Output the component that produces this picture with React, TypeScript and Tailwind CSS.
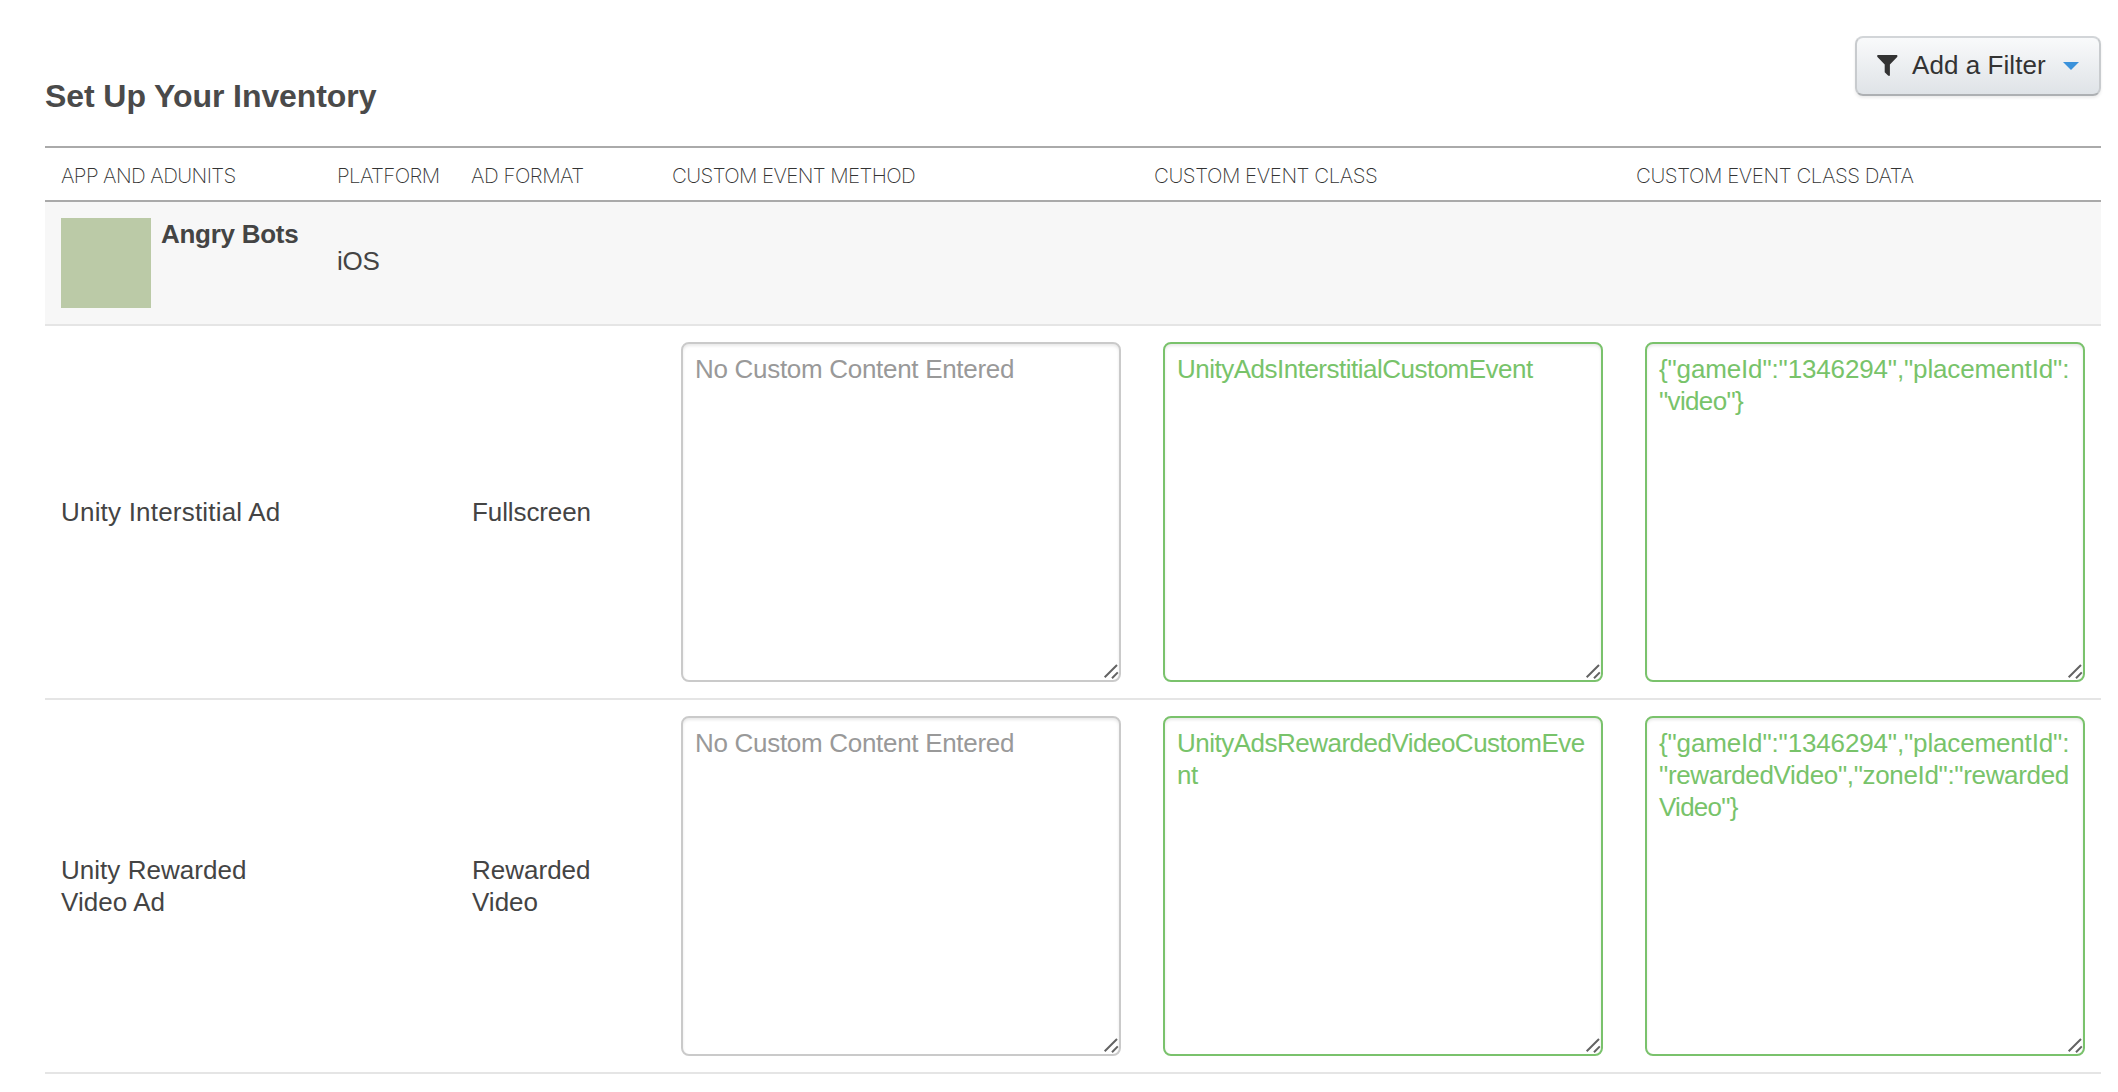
import React from 'react';

type Line = { text: string; spacing: string };

const COLUMNS = 'grid grid-cols-[276px_134px_201px_482px_482px_481px] pl-4';

function Grip() {
  return (
    <svg className="absolute bottom-0 right-0" width="18" height="18" viewBox="0 0 18 18" fill="none" stroke="#636363" strokeWidth="2">
      <path d="M3.7 15.3 16 3M11 16.2 16.8 10.4" />
    </svg>
  );
}

function Field({ lines, filled = false }: { lines: Line[]; filled?: boolean }) {
  return (
    <div
      className={`relative ml-[9px] h-[340px] w-[440px] self-center whitespace-pre rounded-lg border-2 bg-white px-3 py-[9px] shadow-[inset_0_2px_3px_rgba(0,0,0,0.09)] ${
        filled ? 'border-[#7ac26c] text-[#78c36a]' : 'border-[#cacaca] text-[#999999]'
      }`}
    >
      {lines.map((l) => (
        <div key={l.text} className={l.spacing}>{l.text}</div>
      ))}
      <Grip />
    </div>
  );
}

const HEADERS: Line[] = [
  { text: 'APP AND ADUNITS', spacing: 'tracking-[-0.6px]' },
  { text: 'PLATFORM', spacing: 'tracking-[-0.6px]' },
  { text: 'AD FORMAT', spacing: 'tracking-[-0.5px]' },
  { text: 'CUSTOM EVENT METHOD', spacing: 'tracking-[-0.62px]' },
  { text: 'CUSTOM EVENT CLASS', spacing: 'tracking-[-0.46px]' },
  { text: 'CUSTOM EVENT CLASS DATA', spacing: 'tracking-[-0.45px]' },
];

const EMPTY: Line[] = [{ text: 'No Custom Content Entered', spacing: 'tracking-[-0.3px]' }];
const GAME_LINE: Line = { text: '{"gameId":"1346294","placementId":', spacing: 'tracking-[-0.15px]' };

const UNITS: { name: Line[]; format: Line[]; cls: Line[]; data: Line[] }[] = [
  {
    name: [{ text: 'Unity Interstitial Ad', spacing: 'tracking-[0.2px]' }],
    format: [{ text: 'Fullscreen', spacing: 'tracking-[-0.1px]' }],
    cls: [{ text: 'UnityAdsInterstitialCustomEvent', spacing: 'tracking-[-0.505px]' }],
    data: [GAME_LINE, { text: '"video"}', spacing: 'tracking-[-0.65px]' }],
  },
  {
    name: [
      { text: 'Unity Rewarded', spacing: 'tracking-[0.03px]' },
      { text: 'Video Ad', spacing: 'tracking-[0.06px]' },
    ],
    format: [
      { text: 'Rewarded', spacing: 'tracking-[0px]' },
      { text: 'Video', spacing: 'tracking-[0px]' },
    ],
    cls: [
      { text: 'UnityAdsRewardedVideoCustomEve', spacing: 'tracking-[-0.51px]' },
      { text: 'nt', spacing: 'tracking-[-0.48px]' },
    ],
    data: [
      GAME_LINE,
      { text: '"rewardedVideo","zoneId":"rewarded', spacing: 'tracking-[-0.34px]' },
      { text: 'Video"}', spacing: 'tracking-[-0.75px]' },
    ],
  },
];

function Label({ lines, indent = false }: { lines: Line[]; indent?: boolean }) {
  return (
    <div className={`self-center whitespace-nowrap ${indent ? 'pl-px' : ''}`}>
      {lines.map((l) => (
        <div key={l.text} className={l.spacing}>{l.text}</div>
      ))}
    </div>
  );
}

export default function App() {
  return (
    <div className="h-[1092px] w-[2118px] overflow-hidden bg-white pl-[45px] pr-[17px] font-['Liberation_Sans',Arial,sans-serif] text-[26px] leading-8 text-[#444444]">
      <header className="flex h-[146px] items-start justify-between">
        <h1 className="mt-[76px] text-[32px] font-bold leading-10 tracking-[-0.08px] text-[#4a4a4a]">Set Up Your Inventory</h1>
        <button className="mt-9 flex h-[60px] w-[246px] items-center rounded-lg border-2 border-[#d2d5d8] border-b-[#adb0b3] border-r-[#c8cbce] border-l-[#c8cbce] bg-linear-to-b from-[#f9fafb] to-[#dfe3e7] pb-px pl-5 text-[#333333] shadow-[0_2px_3px_rgba(0,0,0,0.08)]">
          <svg width="21" height="21" viewBox="0 0 21 21" fill="#333333">
            <path d="M0.4 0H20.2L20.4 1.8 12.9 9.4V20.8H11.3L7.7 17.2V9.4L0.2 1.8Z" />
          </svg>
          <span className="ml-[14px] whitespace-nowrap pb-[2px] tracking-[0.06px]">Add a Filter</span>
          <svg className="ml-[17px]" width="16" height="8" viewBox="0 0 16 8" fill="#3b92db">
            <path d="M0 0H16L8 8Z" />
          </svg>
        </button>
      </header>

      <div className={`${COLUMNS} h-14 border-y-2 border-[#aaaaaa] pt-3 font-[Inter] text-[20.5px] font-extralight text-[#333333]`}>
        {HEADERS.map((h) => (
          <div key={h.text} className={`whitespace-nowrap ${h.spacing}`}>{h.text}</div>
        ))}
      </div>

      <div className={`${COLUMNS} h-[124px] border-b-2 border-[#e5e5e5] bg-[#f7f7f7]`}>
        <div className="flex pt-4">
          <div className="h-[90px] w-[90px] bg-[#bbcaa7]" />
          <strong className="ml-[10px] tracking-[-0.28px]">Angry Bots</strong>
        </div>
        <div className="self-center pb-1 tracking-[-0.3px]">iOS</div>
      </div>

      {UNITS.map((u) => (
        <div key={u.name[0].text} className={`${COLUMNS} h-[374px] border-b-2 border-[#e5e5e5]`}>
          <Label lines={u.name} />
          <div />
          <Label lines={u.format} indent />
          <Field lines={EMPTY} />
          <Field lines={u.cls} filled />
          <Field lines={u.data} filled />
        </div>
      ))}
    </div>
  );
}
